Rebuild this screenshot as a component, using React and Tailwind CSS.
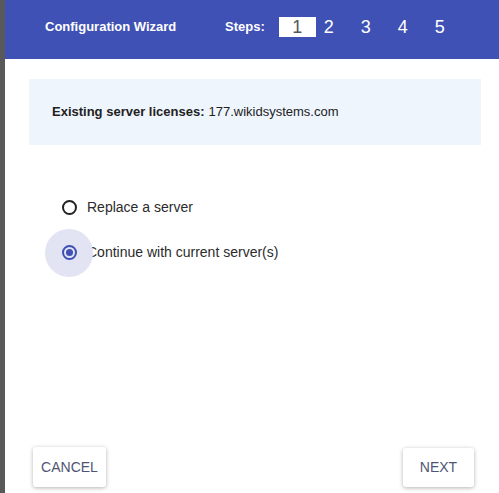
import { useState } from "react";

function Radio({ checked, label, onClick }) {
  return (
    <div className="flex items-center h-[45px] cursor-pointer" onClick={onClick}>
      <div className="relative w-[48px] h-[48px] flex items-center justify-center ml-[45px]">
        {checked && <div className="absolute inset-0 rounded-full bg-[#e2e4f3]"></div>}
        <div
          className={
            "relative w-[15px] h-[15px] rounded-full border-2 flex items-center justify-center " +
            (checked ? "border-[#3f51b5]" : "border-[#222]")
          }
        >
          {checked && <div className="w-[7px] h-[7px] rounded-full bg-[#3f51b5]"></div>}
        </div>
      </div>
      <span className="text-[14px] text-[#2b2b2b] -ml-[6px]">{label}</span>
    </div>
  );
}

function App() {
  const [choice, setChoice] = useState("continue");

  return (
    <div className="flex w-[499px] h-[493px] bg-white overflow-hidden font-['Liberation_Sans',Arial,sans-serif]">
      <div className="w-[5px] h-full bg-[#595959] shrink-0"></div>
      <div className="flex-1 flex flex-col">
        <div className="h-[59px] bg-[#3f51b5] flex items-center text-white shrink-0 pb-[5px]">
          <h1 className="text-[13px] font-bold ml-[40px] w-[180px]">Configuration Wizard</h1>
          <span className="text-[13px] font-bold">Steps:</span>
          <div className="flex items-center ml-[14px] text-[18px]">
            <span className="w-[37px] h-[20px] bg-white text-[#555] flex items-center justify-center leading-none">1</span>
            <span className="ml-[5px] w-[16px] text-center">2</span>
            <span className="ml-[21px] w-[16px] text-center">3</span>
            <span className="ml-[21px] w-[16px] text-center">4</span>
            <span className="ml-[21px] w-[16px] text-center">5</span>
          </div>
        </div>

        <div className="mt-[20px] ml-[24px] w-[452px] h-[66px] bg-[#eef5fd] flex items-center pl-[23px] text-[13px] text-[#222]">
          <span className="font-bold">Existing server licenses:</span>
          <span className="ml-[4px]">177.wikidsystems.com</span>
        </div>

        <div className="mt-[40px] -ml-[5px]">
          <Radio
            label="Replace a server"
            checked={choice === "replace"}
            onClick={() => setChoice("replace")}
          />
          <Radio
            label="Continue with current server(s)"
            checked={choice === "continue"}
            onClick={() => setChoice("continue")}
          />
        </div>

        <div className="flex-1"></div>

        <div className="flex justify-between items-center pl-[28px] pr-[25px] pb-[6px]">
          <button className="h-[40px] w-[73px] bg-white rounded-[3px] text-[14px] text-[#4f5472] shadow-[0_1px_4px_rgba(0,0,0,0.3)]">
            CANCEL
          </button>
          <button className="h-[39px] w-[71px] bg-white rounded-[3px] text-[14px] text-[#4f5472] shadow-[0_1px_4px_rgba(0,0,0,0.3)]">
            NEXT
          </button>
        </div>
      </div>
    </div>
  );
}

export default App;
